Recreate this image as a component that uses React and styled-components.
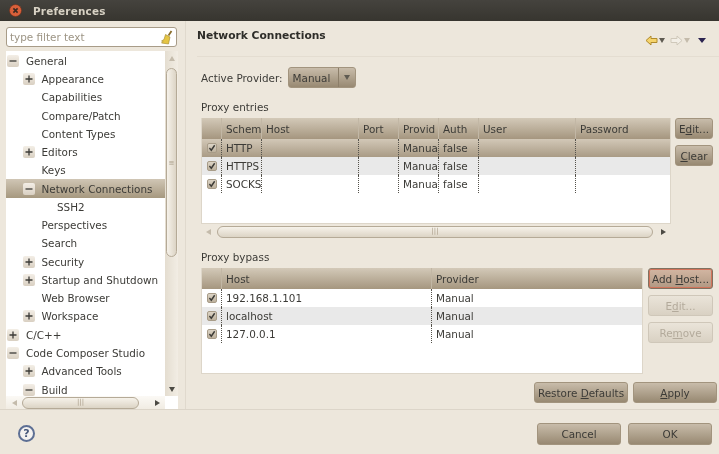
import styled, { createGlobalStyle } from "styled-components";

const GlobalStyle = createGlobalStyle`
  html, body {
    margin: 0;
    padding: 0;
    background: #ede7dc;
  }
`;

const treeRows = [
  { label: "General", level: 0, toggle: "open" },
  { label: "Appearance", level: 1, toggle: "closed" },
  { label: "Capabilities", level: 1 },
  { label: "Compare/Patch", level: 1 },
  { label: "Content Types", level: 1 },
  { label: "Editors", level: 1, toggle: "closed" },
  { label: "Keys", level: 1 },
  { label: "Network Connections", level: 1, toggle: "open", selected: true },
  { label: "SSH2", level: 2 },
  { label: "Perspectives", level: 1 },
  { label: "Search", level: 1 },
  { label: "Security", level: 1, toggle: "closed" },
  { label: "Startup and Shutdown", level: 1, toggle: "closed" },
  { label: "Web Browser", level: 1 },
  { label: "Workspace", level: 1, toggle: "closed" },
  { label: "C/C++", level: 0, toggle: "closed" },
  { label: "Code Composer Studio", level: 0, toggle: "open" },
  { label: "Advanced Tools", level: 1, toggle: "closed" },
  { label: "Build", level: 1, toggle: "open" },
];

const proxyColumns = "19px 40px 97px 40px 40px 40px 97px 1fr";
const proxyHead = ["", "Schem", "Host", "Port", "Provid", "Auth", "User", "Password"];
const proxyRows = [
  ["HTTP", "", "", "Manual", "false", "", ""],
  ["HTTPS", "", "", "Manual", "false", "", ""],
  ["SOCKS", "", "", "Manual", "false", "", ""],
];

const bypassColumns = "19px 210px 1fr";
const bypassHead = ["", "Host", "Provider"];
const bypassRows = [
  ["192.168.1.101", "Manual"],
  ["localhost", "Manual"],
  ["127.0.0.1", "Manual"],
];

const Window = styled.div`
  width: 719px;
  height: 454px;
  display: flex;
  flex-direction: column;
  overflow: hidden;
  background: #ede7dc;
  color: #3c3b37;
  font-family: "DejaVu Sans", sans-serif;
  font-size: 10.4px;
  filter: blur(0.3px);
`;

const TitleBar = styled.div`
  height: 21px;
  flex: none;
  display: flex;
  align-items: center;
  gap: 11px;
  padding-left: 9px;
  background: linear-gradient(#45433e, #37352f);
  color: #d8d2c4;
  font-weight: bold;
  letter-spacing: 0.2px;
`;

const Main = styled.div`
  height: 389px;
  flex: none;
  display: flex;
  border-bottom: 1px solid #dcd5c9;
  box-sizing: border-box;
`;

const Sidebar = styled.div`
  width: 186px;
  flex: none;
  box-sizing: border-box;
  padding: 6px 8px 0 6px;
  display: flex;
  flex-direction: column;
  gap: 4px;
  border-right: 1px solid #e0d9cd;
`;

const FilterBox = styled.div`
  height: 20px;
  flex: none;
  box-sizing: border-box;
  display: flex;
  align-items: center;
  justify-content: space-between;
  padding: 0 2px 0 3px;
  background: #fff;
  border: 1px solid #a89c88;
  border-radius: 3px;
  color: #9c9484;
`;

const TreeFrame = styled.div`
  flex: 1;
  min-height: 0;
  display: grid;
  grid-template-columns: 159px 13px;
  grid-template-rows: 1fr 13px;
  background: #fff;
`;

const TreeList = styled.div`
  overflow: hidden;
  padding-top: 0.6px;
`;

const TreeRow = styled.div`
  height: 18.28px;
  display: flex;
  align-items: center;
  gap: 7px;
  box-sizing: border-box;
  padding-left: ${(p) => 1 + p.$level * 15.5}px;
  white-space: nowrap;
  background: ${(p) => (p.$selected ? "linear-gradient(#d0c6b5, #a6987f)" : "none")};
`;

const Toggle = styled.span`
  width: 12px;
  height: 12px;
  flex: none;
  display: flex;
  align-items: center;
  justify-content: center;
  background: ${(p) => (p.$blank ? "none" : "linear-gradient(#f3eee6, #d9d0c2)")};
  border-radius: 2px;
`;

const VScroll = styled.div`
  background: linear-gradient(90deg, #e4ddd0, #f2ede4);
  display: flex;
  flex-direction: column;
  align-items: center;
  padding: 5px 0 0;
  box-sizing: border-box;
`;

const VThumb = styled.div`
  width: 11px;
  height: 189px;
  margin-top: 7px;
  box-sizing: border-box;
  border: 1px solid #b5aa97;
  border-radius: 6px;
  background: linear-gradient(90deg, #f6f2ea, #dcd4c5);
  display: flex;
  align-items: center;
  justify-content: center;
  color: #a89c88;
  font-size: 7px;
`;

const VArrowDown = styled.div`
  margin-top: auto;
  margin-bottom: 4px;
  width: 0;
  height: 0;
  border-left: 3px solid transparent;
  border-right: 3px solid transparent;
  border-top: 5px solid #4c4a44;
`;

const VArrowUp = styled.div`
  width: 0;
  height: 0;
  border-left: 3px solid transparent;
  border-right: 3px solid transparent;
  border-bottom: 5px solid #c4bbab;
`;

const HScroll = styled.div`
  height: ${(p) => p.$height || 13}px;
  display: flex;
  align-items: center;
  gap: ${(p) => p.$gap || 5}px;
  padding: 0 5px 0 ${(p) => p.$left || 5}px;
  box-sizing: border-box;
  background: ${(p) => (p.$plain ? "none" : "linear-gradient(#fbf9f5, #f1ece3)")};
`;

const HThumb = styled.div`
  width: ${(p) => p.$width}px;
  height: 12px;
  flex: none;
  box-sizing: border-box;
  border: 1px solid #b5aa97;
  border-radius: 6px;
  background: linear-gradient(#f6f2ea, #dcd4c5);
  display: flex;
  align-items: center;
  justify-content: center;
  color: #a89c88;
  font-size: 7px;
  line-height: 1;
`;

const ArrowLeft = styled.div`
  width: 0;
  height: 0;
  flex: none;
  border-top: 3px solid transparent;
  border-bottom: 3px solid transparent;
  border-right: 5px solid #c4bbab;
`;

const ArrowRight = styled.div`
  width: 0;
  height: 0;
  flex: none;
  margin-left: auto;
  border-top: 3px solid transparent;
  border-bottom: 3px solid transparent;
  border-left: 5px solid #4c4a44;
`;

const Corner = styled.div`
  background: #fff;
`;

const Content = styled.div`
  flex: 1;
  min-width: 0;
  display: flex;
  flex-direction: column;
  padding-left: 11px;
`;

const PageHeader = styled.div`
  height: 36px;
  flex: none;
  display: flex;
  align-items: flex-start;
  justify-content: space-between;
  border-bottom: 1px solid #e4ddd1;
  padding: 8px 13px 0 0;
  box-sizing: border-box;
`;

const PageTitle = styled.div`
  font-weight: bold;
  font-size: 10.7px;
  color: #2e2d29;
`;

const HistoryNav = styled.div`
  display: flex;
  align-items: center;
  gap: 1px;
  margin-top: 6px;
`;

const NavDrop = styled.span`
  width: 0;
  height: 0;
  margin-right: ${(p) => p.$space || 0}px;
  border-left: ${(p) => (p.$wide ? 4 : 3)}px solid transparent;
  border-right: ${(p) => (p.$wide ? 4 : 3)}px solid transparent;
  border-top: 5px solid ${(p) => p.$color};
`;

const Body = styled.div`
  flex: 1;
  display: flex;
  flex-direction: column;
  padding-left: 4px;
`;

const ProviderRow = styled.div`
  display: flex;
  align-items: center;
  gap: 5px;
  margin-top: 10px;
  height: 21px;
`;

const Select = styled.div`
  width: 68px;
  height: 21px;
  box-sizing: border-box;
  display: flex;
  align-items: center;
  border: 1px solid #a2947e;
  border-radius: 3px;
  background: linear-gradient(#c8bcaa, #988972);
`;

const SelectText = styled.span`
  flex: 1;
  padding-left: 4px;
`;

const SelectArrow = styled.span`
  width: 17px;
  height: 100%;
  box-sizing: border-box;
  border-left: 1px solid #8c7e69;
  display: flex;
  align-items: center;
  justify-content: center;
`;

const SectionLabel = styled.div`
  height: 16px;
  margin-top: ${(p) => p.$top}px;
  display: flex;
  align-items: center;
`;

const TableRow = styled.div`
  display: flex;
  align-items: flex-start;
  gap: ${(p) => p.$gap}px;
  margin-top: 3px;
`;

const TableWrap = styled.div`
  width: ${(p) => p.$width}px;
  flex: none;
`;

const Table = styled.div`
  height: ${(p) => p.$height}px;
  box-sizing: border-box;
  background: #fff;
  border: 1px solid #ddd6c9;
  border-top: none;
  overflow: hidden;
`;

const HeadRow = styled.div`
  display: grid;
  grid-template-columns: ${(p) => p.$columns};
  height: 21px;
  background: linear-gradient(#d3c9b8, #a5967f);
`;

const HeadCell = styled.div`
  display: flex;
  align-items: center;
  padding-left: 4px;
  min-width: 0;
  overflow: hidden;
  white-space: nowrap;
  border-left: ${(p) => (p.$first ? "none" : "1px solid #c2b7a5")};
`;

const DataRow = styled.div`
  display: grid;
  grid-template-columns: ${(p) => p.$columns};
  height: 18px;
  background: ${(p) =>
    p.$selected ? "linear-gradient(#d2c8b7, #a99b85)" : p.$striped ? "#e9e9e9" : "#fff"};
`;

const DataCell = styled.div`
  display: flex;
  align-items: center;
  padding-left: 4px;
  min-width: 0;
  overflow: hidden;
  white-space: nowrap;
  border-left: 1px dotted #55524b;
`;

const CheckCell = styled.div`
  display: flex;
  align-items: center;
  justify-content: center;
`;

const Check = styled.span`
  width: 10px;
  height: 10px;
  box-sizing: border-box;
  display: flex;
  align-items: center;
  justify-content: center;
  border-radius: 2px;
  border: 1px solid #a89c88;
  background: linear-gradient(#dcd4c6, #bdb19d);
`;

const SideButtons = styled.div`
  flex: none;
  display: flex;
  flex-direction: column;
  gap: ${(p) => p.$gap}px;
  margin-top: ${(p) => p.$top || 0}px;
`;

const Button = styled.div`
  width: ${(p) => p.$width}px;
  height: ${(p) => p.$height || 21}px;
  flex: none;
  box-sizing: border-box;
  display: flex;
  align-items: center;
  justify-content: center;
  white-space: nowrap;
  border-radius: 3px;
  border: 1px solid ${(p) => (p.$disabled ? "#cfc7b9" : p.$focused ? "#7f7261" : "#a2947e")};
  color: ${(p) => (p.$disabled ? "#b3aa9b" : "#3c3b37")};
  background: ${(p) =>
    p.$disabled
      ? "linear-gradient(#eae4d9, #d9d1c3)"
      : p.$focused
      ? "linear-gradient(#d3b6a2, #b09883)"
      : "linear-gradient(#c8bcaa, #988972)"};
  box-shadow: ${(p) => (p.$focused ? "inset 0 0 0 1px #d1735a" : "none")};
  u {
    text-underline-offset: 1px;
  }
`;

const ActionRow = styled.div`
  display: flex;
  gap: 5px;
  margin-top: 8px;
  padding-left: 333px;
`;

const Footer = styled.div`
  flex: 1;
  display: flex;
  align-items: center;
  justify-content: space-between;
  padding: 3px 7px 0 18px;
`;

const FooterButtons = styled.div`
  display: flex;
  gap: 7px;
`;

const HelpIcon = styled.div`
  width: 17px;
  height: 17px;
  box-sizing: border-box;
  border: 2px solid #5d6f94;
  border-radius: 50%;
  display: flex;
  align-items: center;
  justify-content: center;
  background: #f4f2f0;
  color: #48597c;
  font-weight: bold;
  font-size: 11px;
`;

const CloseIcon = () => (
  <svg width="13" height="13" viewBox="0 0 13 13">
    <circle cx="6.5" cy="6.5" r="6" fill="#d9603a" stroke="#6b2f1c" strokeWidth="0.6" />
    <path d="M4.4 4.4l4.2 4.2M8.6 4.4l-4.2 4.2" stroke="#3a2a22" strokeWidth="1.6" />
  </svg>
);

const BroomIcon = () => (
  <svg width="14" height="15" viewBox="0 0 14 15">
    <path d="M8.5 5.5L11.5 1" stroke="#8a6d2a" strokeWidth="1.8" />
    <path d="M5.5 4.5l4.5 2.5-1.5 7-7-1 1.5-1.5-1.5-.5 2.5-1.5z" fill="#e5c544" stroke="#a08428" strokeWidth="0.6" />
  </svg>
);

const ToggleMark = ({ open }) => (
  <svg width="8" height="8" viewBox="0 0 8 8">
    <path d={open ? "M0.5 4h7" : "M0.5 4h7M4 0.5v7"} stroke="#3c3b37" strokeWidth="1.3" />
  </svg>
);

const CheckMark = () => (
  <svg width="8" height="8" viewBox="0 0 9 9">
    <path d="M1.6 4.6l2.1 2.4 3.8-5.6" fill="none" stroke="#3c3b37" strokeWidth="1.6" />
  </svg>
);

const NavArrow = ({ flip, fill, stroke }) => (
  <svg width="13" height="11" viewBox="0 0 13 11" style={flip ? { transform: "scaleX(-1)" } : undefined}>
    <path d="M1 5.5L6 1v2.5h6v4H6V10z" fill={fill} stroke={stroke} strokeWidth="1" />
  </svg>
);

const App = () => (
  <Window>
    <GlobalStyle />
    <TitleBar>
      <CloseIcon />
      <span>Preferences</span>
    </TitleBar>
    <Main>
      <Sidebar>
        <FilterBox>
          <span>type filter text</span>
          <BroomIcon />
        </FilterBox>
        <TreeFrame>
          <TreeList>
            {treeRows.map((row) => (
              <TreeRow key={row.label} $level={row.level} $selected={row.selected}>
                <Toggle $blank={!row.toggle}>
                  {row.toggle && <ToggleMark open={row.toggle === "open"} />}
                </Toggle>
                <span>{row.label}</span>
              </TreeRow>
            ))}
          </TreeList>
          <VScroll>
            <VArrowUp />
            <VThumb>≡</VThumb>
            <VArrowDown />
          </VScroll>
          <HScroll $left={6}>
            <ArrowLeft />
            <HThumb $width={117}>|||</HThumb>
            <ArrowRight />
          </HScroll>
          <Corner />
        </TreeFrame>
      </Sidebar>
      <Content>
        <PageHeader>
          <PageTitle>Network Connections</PageTitle>
          <HistoryNav>
            <NavArrow fill="#f5d36b" stroke="#b08a2c" />
            <NavDrop $color="#5f5b52" $space={4} />
            <NavArrow flip fill="#f2eee6" stroke="#cfc8ba" />
            <NavDrop $color="#c4bbab" $space={7} />
            <NavDrop $color="#2b2350" $wide />
          </HistoryNav>
        </PageHeader>
        <Body>
          <ProviderRow>
            <span>Active Provider:</span>
            <Select>
              <SelectText>Manual</SelectText>
              <SelectArrow>
                <NavDrop $color="#5f5b52" />
              </SelectArrow>
            </Select>
          </ProviderRow>
          <SectionLabel $top={11}>Proxy entries</SectionLabel>
          <TableRow $gap={4}>
            <TableWrap $width={470}>
              <Table $height={106}>
                <HeadRow $columns={proxyColumns}>
                  {proxyHead.map((title, i) => (
                    <HeadCell key={i} $first={i === 0}>{title}</HeadCell>
                  ))}
                </HeadRow>
                {proxyRows.map((cells, r) => (
                  <DataRow key={r} $columns={proxyColumns} $selected={r === 0} $striped={r === 1}>
                    <CheckCell>
                      <Check><CheckMark /></Check>
                    </CheckCell>
                    {cells.map((text, c) => (
                      <DataCell key={c}>{text}</DataCell>
                    ))}
                  </DataRow>
                ))}
              </Table>
              <HScroll $height={15} $plain $gap={6}>
                <ArrowLeft />
                <HThumb $width={436}>|||</HThumb>
                <ArrowRight />
              </HScroll>
            </TableWrap>
            <SideButtons $gap={6}>
              <Button $width={38}><span>E<u>d</u>it...</span></Button>
              <Button $width={38}><span><u>C</u>lear</span></Button>
            </SideButtons>
          </TableRow>
          <SectionLabel $top={10}>Proxy bypass</SectionLabel>
          <TableRow $gap={5}>
            <TableWrap $width={442}>
              <Table $height={106}>
                <HeadRow $columns={bypassColumns}>
                  {bypassHead.map((title, i) => (
                    <HeadCell key={i} $first={i === 0}>{title}</HeadCell>
                  ))}
                </HeadRow>
                {bypassRows.map((cells, r) => (
                  <DataRow key={r} $columns={bypassColumns} $striped={r === 1}>
                    <CheckCell>
                      <Check><CheckMark /></Check>
                    </CheckCell>
                    {cells.map((text, c) => (
                      <DataCell key={c}>{text}</DataCell>
                    ))}
                  </DataRow>
                ))}
              </Table>
            </TableWrap>
            <SideButtons $gap={6}>
              <Button $width={65} $focused><span>Add <u>H</u>ost...</span></Button>
              <Button $width={65} $disabled><span>E<u>d</u>it...</span></Button>
              <Button $width={65} $disabled><span>Re<u>m</u>ove</span></Button>
            </SideButtons>
          </TableRow>
          <ActionRow>
            <Button $width={94}><span>Restore <u>D</u>efaults</span></Button>
            <Button $width={84}><span><u>A</u>pply</span></Button>
          </ActionRow>
        </Body>
      </Content>
    </Main>
    <Footer>
      <HelpIcon>?</HelpIcon>
      <FooterButtons>
        <Button $width={84} $height={22}>Cancel</Button>
        <Button $width={84} $height={22}>OK</Button>
      </FooterButtons>
    </Footer>
  </Window>
);

export default App;
